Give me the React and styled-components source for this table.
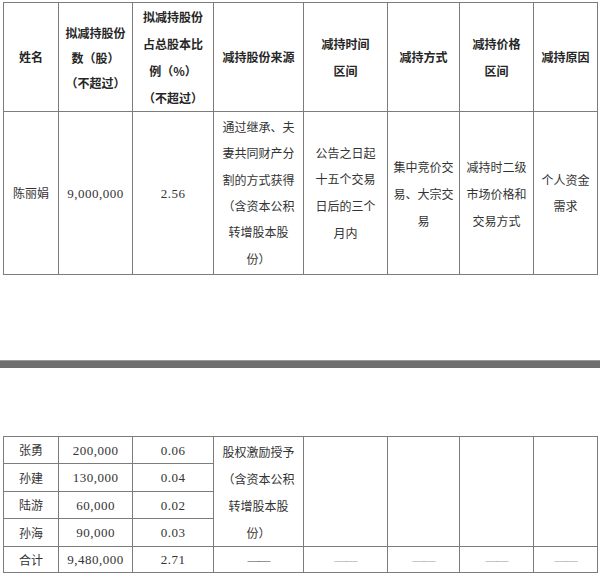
import React, { Fragment } from "react";
import styled, { createGlobalStyle } from "styled-components";

const GlobalStyle = createGlobalStyle`
  body {
    margin: 0;
    background: #ffffff;
    font-family: "Noto Sans CJK SC", "Liberation Serif", serif;
    color: #2e2e2e;
  }
`;

const Page = styled.div`
  width: 600px;
  padding-top: 2px;
`;

const Table = styled.table`
  width: 594px;
  margin: 0 3px;
  border-collapse: collapse;
  table-layout: fixed;
`;

const Row = styled.tr`
  height: ${p => p.h}px;
`;

const Cell = styled.td`
  border: 1px solid #7c7c7c;
  padding: 0;
  text-align: center;
  vertical-align: middle;
  white-space: nowrap;
  font-size: 12px;
  line-height: ${p => p.lh || 24}px;
  font-weight: ${p => (p.head ? 700 : 400)};
  color: ${p => (p.head ? "#262626" : "#333333")};
`;

const Num = styled.span`
  font-family: "Liberation Serif", serif;
  font-size: 13px;
  letter-spacing: 0.5px;
  color: #333;
`;

const Dash = styled.span`
  font-family: "Liberation Serif", serif;
  font-size: 12px;
  letter-spacing: -1px;
  color: ${p => (p.light ? "#9a9a9a" : "#444")};
`;

const Gap = styled.div`
  height: ${p => p.h}px;
`;

const Bar = styled.div`
  height: 8px;
  background: #6f6f6f;
  border-top: 1px solid #9a9a9a;
  box-sizing: border-box;
`;

const widths = [55, 74, 81, 90, 84, 72, 74, 64];

const Lines = ({ lines }) =>
  lines.map((l, i) => (
    <Fragment key={i}>
      {i > 0 && <br />}
      {l}
    </Fragment>
  ));

const Cols = () => (
  <colgroup>
    {widths.map((w, i) => (
      <col key={i} style={{ width: w }} />
    ))}
  </colgroup>
);

const headers = [
  { lines: ["姓名"] },
  { lines: ["拟减持股份", "数（股）", "（不超过）"], lh: 25 },
  { lines: ["拟减持股份", "占总股本比", "例（%）", "（不超过）"], lh: 27 },
  { lines: ["减持股份来源"] },
  { lines: ["减持时间", "区间"], lh: 27 },
  { lines: ["减持方式"] },
  { lines: ["减持价格", "区间"], lh: 27 },
  { lines: ["减持原因"] }
];

const smallRows = [
  ["张勇", "200,000", "0.06"],
  ["孙建", "130,000", "0.04"],
  ["陆游", "60,000", "0.02"],
  ["孙海", "90,000", "0.03"]
];

const smallHeights = [27, 28, 27, 28];

export default function App() {
  return (
    <Page>
      <GlobalStyle />
      <Table>
        <Cols />
        <tbody>
          <Row h={108}>
            {headers.map((h, i) => (
              <Cell key={i} head lh={h.lh}>
                <Lines lines={h.lines} />
              </Cell>
            ))}
          </Row>
          <Row h={163}>
            <Cell>陈丽娟</Cell>
            <Cell>
              <Num>9,000,000</Num>
            </Cell>
            <Cell>
              <Num>2.56</Num>
            </Cell>
            <Cell lh={26.4}>
              <Lines
                lines={[
                  "通过继承、夫",
                  "妻共同财产分",
                  "割的方式获得",
                  "（含资本公积",
                  "转增股本股",
                  "份）"
                ]}
              />
            </Cell>
            <Cell lh={26.6}>
              <Lines lines={["公告之日起", "十五个交易", "日后的三个", "月内"]} />
            </Cell>
            <Cell lh={27}>
              <Lines lines={["集中竞价交", "易、大宗交", "易"]} />
            </Cell>
            <Cell lh={27}>
              <Lines lines={["减持时二级", "市场价格和", "交易方式"]} />
            </Cell>
            <Cell lh={26}>
              <Lines lines={["个人资金", "需求"]} />
            </Cell>
          </Row>
        </tbody>
      </Table>
      <Gap h={85} />
      <Bar />
      <Gap h={68} />
      <Table>
        <Cols />
        <tbody>
          {smallRows.map((r, i) => (
            <Row key={r[0]} h={smallHeights[i]}>
              <Cell>{r[0]}</Cell>
              <Cell>
                <Num>{r[1]}</Num>
              </Cell>
              <Cell>
                <Num>{r[2]}</Num>
              </Cell>
              {i === 0 && (
                <Fragment>
                  <Cell rowSpan={4} lh={27}>
                    <Lines
                      lines={["股权激励授予", "（含资本公积", "转增股本股", "份）"]}
                    />
                  </Cell>
                  <Cell rowSpan={4} />
                  <Cell rowSpan={4} />
                  <Cell rowSpan={4} />
                  <Cell rowSpan={4} />
                </Fragment>
              )}
            </Row>
          ))}
          <Row h={26}>
            <Cell>合计</Cell>
            <Cell>
              <Num>9,480,000</Num>
            </Cell>
            <Cell>
              <Num>2.71</Num>
            </Cell>
            <Cell>
              <Dash>——</Dash>
            </Cell>
            {[0, 1, 2, 3].map(k => (
              <Cell key={k}>
                <Dash light>——</Dash>
              </Cell>
            ))}
          </Row>
        </tbody>
      </Table>
    </Page>
  );
}
